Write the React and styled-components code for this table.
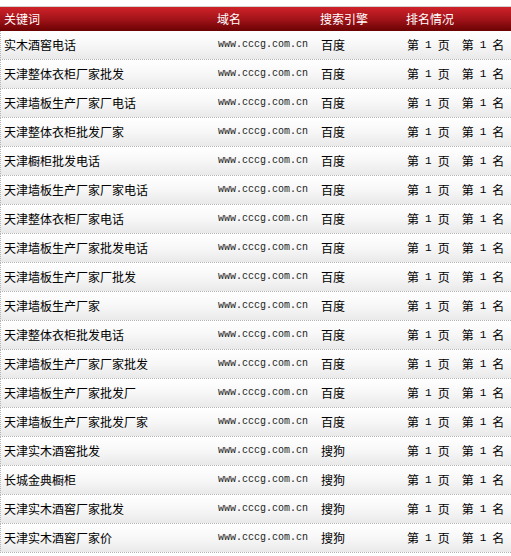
import React from "react";
import styled, { createGlobalStyle } from "styled-components";

const GlobalStyle = createGlobalStyle`
  body {
    margin: 0;
    background: #fff;
    font-family: "Noto Sans CJK SC", "Liberation Sans", sans-serif;
    font-size: 12px;
    color: #000;
  }
`;

const rows = [
  ["实木酒窖电话", "百度"],
  ["天津整体衣柜厂家批发", "百度"],
  ["天津墙板生产厂家厂电话", "百度"],
  ["天津整体衣柜批发厂家", "百度"],
  ["天津橱柜批发电话", "百度"],
  ["天津墙板生产厂家厂家电话", "百度"],
  ["天津整体衣柜厂家电话", "百度"],
  ["天津墙板生产厂家批发电话", "百度"],
  ["天津墙板生产厂家厂批发", "百度"],
  ["天津墙板生产厂家", "百度"],
  ["天津整体衣柜批发电话", "百度"],
  ["天津墙板生产厂家厂家批发", "百度"],
  ["天津墙板生产厂家批发厂", "百度"],
  ["天津墙板生产厂家批发厂家", "百度"],
  ["天津实木酒窖批发", "搜狗"],
  ["长城金典橱柜", "搜狗"],
  ["天津实木酒窖厂家批发", "搜狗"],
  ["天津实木酒窖厂家价", "搜狗"],
];

const Wrapper = styled.div`
  width: 511px;
  padding-top: 6px;
`;

const Table = styled.div`
  border-top: 1px solid #d2d2d2;
`;

const Line = styled.div`
  display: grid;
  grid-template-columns: 213px 103px 85px 1fr;
  align-items: center;
`;

const Head = styled(Line)`
  height: 24px;
  background: linear-gradient(to bottom, #cf2229 0%, #a3141a 50%, #6a0202 100%);
  color: #fff;
`;

const Row = styled(Line)`
  height: 28px;
  background: linear-gradient(to bottom, #ffffff 0%, #f7f7f7 50%, #e9e9e9 100%);
  border-bottom: 1px dotted #b5b5b5;
  border-left: 1px dotted #b5b5b5;
`;

const Cell = styled.div`
  padding-left: ${(p) => p.$pad || 4}px;
  white-space: nowrap;
  line-height: 16px;
`;

const Domain = styled(Cell)`
  font-family: "Liberation Mono", "DejaVu Sans Mono", monospace;
  font-size: 10px;
  color: #222;
`;

const Rank = styled(Cell)`
  display: flex;
  align-items: center;
`;

const Num = styled.span`
  font-family: "Liberation Mono", monospace;
  font-size: 11px;
  margin: 0 ${(p) => p.$gap}px;
`;

const Sep = styled.span`
  width: 12px;
`;

const RankText = () => (
  <>
    <span>第</span>
    <Num $gap={6}>1</Num>
    <span>页</span>
    <Sep />
    <span>第</span>
    <Num $gap={6}>1</Num>
    <span>名</span>
  </>
);

export default function App() {
  return (
    <>
      <GlobalStyle />
      <Wrapper>
        <Table>
          <Head>
            <Cell>关键词</Cell>
            <Cell>域名</Cell>
            <Cell>搜索引擎</Cell>
            <Cell $pad={5}>排名情况</Cell>
          </Head>
          {rows.map(([kw, engine], i) => (
            <Row key={i}>
              <Cell $pad={3}>{kw}</Cell>
              <Domain>www.cccg.com.cn</Domain>
              <Cell>{engine}</Cell>
              <Rank $pad={5}>
                <RankText />
              </Rank>
            </Row>
          ))}
        </Table>
      </Wrapper>
    </>
  );
}
